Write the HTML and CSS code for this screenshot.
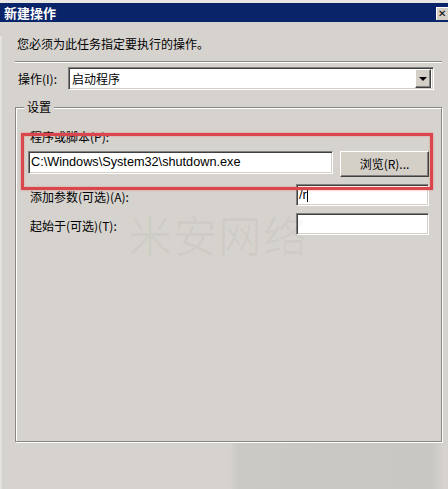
FILE: index.html
```html
<!DOCTYPE html>
<html lang="zh-CN">
<head>
<meta charset="utf-8">
<title>新建操作</title>
<link rel="stylesheet" href="styles.css">
</head>
<body>
<div class="window">
  <div class="topstrip"></div>
  <div class="titlebar">
    <span class="title">新建操作</span>
    <span class="close">✕</span>
  </div>
  <div class="main">
    <p class="desc">您必须为此任务指定要执行的操作。</p>
    <div class="sep"></div>
    <div class="oprow">
      <span class="oplabel">操作(I):</span>
      <div class="combo">
        <span class="combo-text">启动程序</span>
        <span class="combo-btn"><span class="arrow"></span></span>
      </div>
    </div>
    <div class="group">
      <span class="legend">设置</span>
      <div class="lbl lbl-prog">程序或脚本(P):</div>
      <div class="pathrow">
        <div class="input path">C:\Windows\System32\shutdown.exe</div>
        <div class="btn">浏览(R)...</div>
      </div>
      <div class="frow">
        <span class="lbl">添加参数(可选)(A):</span>
        <div class="input small">/r<span class="caret"></span></div>
      </div>
      <div class="frow">
        <span class="lbl">起始于(可选)(T):</span>
        <div class="input small"></div>
      </div>
    </div>
    <div class="bottom"></div>
  </div>
  <div class="highlight"></div>
  <div class="watermark">米安网络</div>
</div>
</body>
</html>
```

FILE: styles.css
```css
* { box-sizing: border-box; }
html, body { margin: 0; padding: 0; }
body {
  background: #d6d3ce;
  font-family: "Noto Sans CJK SC", "Liberation Sans", sans-serif;
  font-size: 12px;
  color: #000;
}
.window {
  position: relative;
  width: 448px;
  height: 489px;
  overflow: hidden;
  background: #d6d3ce;
}
.topstrip {
  height: 3px;
  background: #e9e7e3;
}
.titlebar {
  height: 19px;
  background: #0a246a;
  display: flex;
  align-items: flex-start;
}
.title {
  color: #fff;
  font-weight: bold;
  font-size: 13px;
  line-height: 19px;
  padding-left: 4px;
}
.close {
  margin-left: auto;
  margin-top: 4px;
  width: 12px;
  height: 13px;
  background: #d4d0c8;
  border-top: 1px solid #fff;
  border-left: 1px solid #fff;
  font-size: 10px;
  line-height: 12px;
  font-family: "DejaVu Sans", sans-serif;
  font-weight: bold;
  padding-left: 1px;
  overflow: hidden;
}
.main {
  border-left: 2px solid #e4e2de;
}
.desc {
  margin: 14px 0 0 15px;
  line-height: 16px;
}
.sep {
  margin: 9px 0 0 13px;
  width: 427px;
  height: 2px;
  border-top: 1px solid #8a8884;
  border-bottom: 1px solid #fff;
}
.oprow {
  margin-top: 4px;
  display: flex;
  align-items: center;
  height: 23px;
}
.oplabel {
  padding-left: 16px;
  width: 66px;
  line-height: 16px;
}
.combo {
  width: 366px;
  height: 23px;
  background: #fff;
  border: 1px solid;
  border-color: #808080 #fff #fff #808080;
  box-shadow: inset 1px 1px 0 #404040, inset -1px -1px 0 #d4d0c8;
  display: flex;
  align-items: center;
  padding: 2px;
}
.combo-text {
  flex: 1;
  padding-left: 1px;
  line-height: 16px;
}
.combo-btn {
  width: 16px;
  height: 19px;
  background: #d4d0c8;
  border: 1px solid;
  border-color: #fff #404040 #404040 #fff;
  box-shadow: inset -1px -1px 0 #808080;
  display: flex;
  align-items: center;
  justify-content: center;
}
.arrow {
  width: 0;
  height: 0;
  border-left: 4px solid transparent;
  border-right: 4px solid transparent;
  border-top: 4px solid #000;
  margin-top: 1px;
}
.group {
  position: relative;
  margin: 17px 0 0 13px;
  width: 427px;
  height: 335px;
  border: 1px solid #8a8884;
  box-shadow: inset 1px 1px 0 #fff, 1px 1px 0 #fff;
  padding: 21px 0 0 12px;
}
.legend {
  position: absolute;
  left: 8px;
  top: -9px;
  padding: 0 3px;
  background: #d6d3ce;
  line-height: 16px;
}
.lbl {
  line-height: 16px;
  padding-left: 2px;
}
.pathrow {
  margin-top: 6px;
  display: flex;
  align-items: flex-start;
  height: 26px;
}
.input {
  background: #fff;
  border: 1px solid;
  border-color: #808080 #fff #fff #808080;
  box-shadow: inset 1px 1px 0 #404040, inset -1px -1px 0 #d4d0c8;
}
.path {
  width: 305px;
  height: 23px;
  font-family: "Liberation Sans", sans-serif;
  font-size: 12.7px;
  line-height: 21px;
  padding-left: 2px;
  white-space: nowrap;
}
.btn {
  margin-left: 7px;
  width: 89px;
  height: 26px;
  background: #d4d0c8;
  border: 1px solid;
  border-color: #fff #404040 #404040 #fff;
  box-shadow: inset -1px -1px 0 #808080;
  text-align: center;
  line-height: 24px;
}
.frow {
  margin-top: 7px;
  display: grid;
  grid-template-columns: 268px 133px;
  align-items: start;
}
.frow .lbl {
  margin-top: 5px;
}
.small {
  height: 22px;
  font-family: "Liberation Sans", sans-serif;
  font-size: 13px;
  line-height: 20px;
  padding-left: 2px;
  display: flex;
  align-items: center;
}
.caret {
  width: 1px;
  height: 14px;
  background: #000;
}
.bottom {
  height: 47px;
  background: linear-gradient(90deg, #d6d3ce 0, #d6d3ce 228px, #cbc9c4 236px, #c9c7c2 430px, #d6d3ce 442px);
}
.highlight {
  position: absolute;
  left: 21px;
  top: 133px;
  width: 412px;
  height: 57px;
  border: 3px solid #d9474c;
  box-shadow: 0 0 2px rgba(230, 90, 90, 0.6), inset 0 0 2px rgba(230, 90, 90, 0.6);
  pointer-events: none;
}
.watermark {
  position: absolute;
  left: 128px;
  top: 206px;
  font-size: 44px;
  line-height: 56px;
  letter-spacing: 1px;
  color: rgba(0, 0, 0, 0.03);
  pointer-events: none;
}
```
